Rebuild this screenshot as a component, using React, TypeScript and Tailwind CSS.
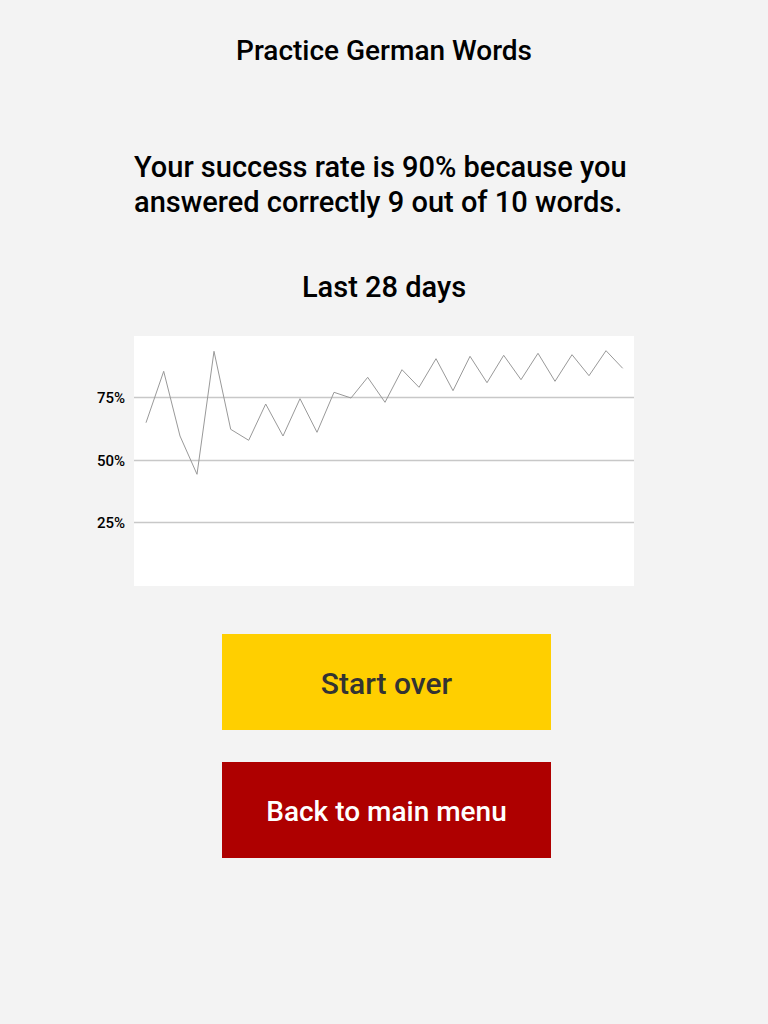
const points: [number, number][] = [
  [146, 422.7], [163.7, 371.3], [180, 436], [197, 474.3], [214, 351.3],
  [230.7, 429.3], [248.7, 440.3], [265.7, 404], [283, 436], [300, 398.7],
  [317, 432.3], [334, 392.3], [351, 398], [367.7, 377.3], [385, 402.3],
  [402, 369.7], [419, 387.3], [436, 358.7], [453, 390.7], [470, 356.3],
  [487, 382.7], [503.7, 355.3], [521, 379.7], [538, 353.3], [555, 381.3],
  [572, 354.7], [589, 375.7], [606, 350.7], [622.7, 368.3],
];

// grid lines relative to chart top (y=336)
const grid = [
  { label: "75%", y: 61.5 },
  { label: "50%", y: 124.5 },
  { label: "25%", y: 186.5 },
];

function Chart() {
  const line = points.map(([x, y]) => `${x - 134},${y - 336}`).join(" ");
  return (
    <div className="relative mt-[31px] h-[250px] w-[500px] bg-white">
      <svg className="absolute inset-0" width={500} height={250} viewBox="0 0 500 250">
        {grid.map((g) => (
          <line key={g.label} x1={0} x2={500} y1={g.y} y2={g.y} stroke="#c8c8c8" strokeWidth={1.5} />
        ))}
        <polyline points={line} fill="none" stroke="#999" strokeWidth={1} />
      </svg>
      {grid.map((g) => (
        <span
          key={g.label}
          className="absolute right-[509px] -translate-y-1/2 text-[15px] leading-none font-medium text-black"
          style={{ top: g.y }}
        >
          {g.label}
        </span>
      ))}
    </div>
  );
}

export default function App() {
  return (
    <div
      className="min-h-screen bg-[#f3f3f3] flex flex-col items-center text-black"
      style={{ fontFamily: "Roboto, 'Liberation Sans', sans-serif" }}
    >
      <h1 className="pt-[34px] text-[28px] leading-[34px] font-medium">Practice German Words</h1>
      <p className="mt-[82px] w-[500px] text-[29px] leading-[35px] font-medium">
        Your success rate is 90% because you
        <br />
        answered correctly 9 out of 10 words.
      </p>
      <h2 className="mt-[50px] text-[29px] leading-[35px] font-medium">Last 28 days</h2>
      <Chart />
      <button className="ml-[5px] mt-[48px] h-[96px] w-[329px] bg-[#ffcf00] pt-[3px] text-[30px] font-medium text-[#333]">
        Start over
      </button>
      <button className="ml-[5px] mt-[32px] h-[96px] w-[329px] bg-[#ae0000] pt-[3px] text-[28px] font-medium text-white">
        Back to main menu
      </button>
    </div>
  );
}
